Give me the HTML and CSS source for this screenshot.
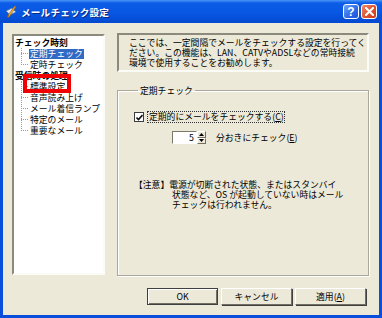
FILE: index.html
```html
<!DOCTYPE html>
<html lang="ja">
<head>
    <meta charset="UTF-8">
    <title>メールチェック設定</title>
    <link rel="stylesheet" href="styles.css">
</head>
<body>
    <div class="window">
        <div class="titlebar">
            <svg class="app-icon" width="13" height="13" viewBox="0 0 13 13">
                <path d="M1 6 L7 3 L11 7 L5 10 Z" fill="#dfe9f7" stroke="#4a6fb0" stroke-width="0.8"/>
                <path d="M2 12 L9 2 L11 1 L10 3 L4 12 Z" fill="#f7c530" stroke="#b3620f" stroke-width="0.8"/>
                <path d="M2 12 L3 10 L4 11 Z" fill="#7a3a05"/>
            </svg>
            <span class="title">メールチェック設定</span>
            <div class="caption-buttons">
                <span class="cap-btn help">?</span>
                <span class="cap-btn close">
                    <svg width="9" height="9" viewBox="0 0 9 9">
                        <path d="M1 1 L8 8 M8 1 L1 8" stroke="#fff" stroke-width="2" stroke-linecap="square"/>
                    </svg>
                </span>
            </div>
        </div>

        <div class="client">
            <div class="main">
                <div class="tree">
                    <ul class="tree-root">
                        <li>
                            <span class="label bold">チェック時刻</span>
                            <ul class="children">
                                <li><span class="label selected">定期チェック</span></li>
                                <li><span class="label">定時チェック</span></li>
                            </ul>
                        </li>
                        <li>
                            <span class="label bold">受信時の処理</span>
                            <ul class="children">
                                <li><span class="label">標準設定</span></li>
                                <li><span class="label">音声読み上げ</span></li>
                                <li><span class="label">メール着信ランプ</span></li>
                                <li><span class="label">特定のメール</span></li>
                                <li><span class="label">重要なメール</span></li>
                            </ul>
                        </li>
                    </ul>
                    <div class="callout"></div>
                </div>

                <div class="pane">
                    <div class="info">
                        ここでは、一定間隔でメールをチェックする設定を行ってく<br>
                        ださい。この機能は、LAN、CATVやADSLなどの常時接続<br>
                        環境で使用することをお勧めします。
                    </div>

                    <fieldset class="group">
                        <legend>定期チェック</legend>
                        <div class="check-row">
                            <span class="checkbox">
                                <svg width="7" height="7" viewBox="0 0 7 7">
                                    <path d="M0.5 3.5 L2.5 5.5 L6.5 1" fill="none" stroke="#111" stroke-width="1.6"/>
                                </svg>
                            </span>
                            <span class="focus">定期的にメールをチェックする(<u>C</u>)</span>
                        </div>
                        <div class="spin-row">
                            <span class="spin-box">5</span>
                            <span class="spin-btns">
                                <span class="spin-btn">
                                    <svg width="5" height="3" viewBox="0 0 5 3"><path d="M0 3 L2.5 0 L5 3 Z" fill="#000"/></svg>
                                </span>
                                <span class="spin-btn">
                                    <svg width="5" height="3" viewBox="0 0 5 3"><path d="M0 0 L2.5 3 L5 0 Z" fill="#000"/></svg>
                                </span>
                            </span>
                            <span class="spin-label">分おきにチェック(<u>E</u>)</span>
                        </div>
                        <p class="note">
                            【注意】電源が切断された状態、またはスタンバイ<br>
                            状態など、OS が起動していない時はメール<br>
                            チェックは行われません。
                        </p>
                    </fieldset>
                </div>
            </div>

            <div class="buttons">
                <button class="default">OK</button>
                <button>キャンセル</button>
                <button>適用(<u>A</u>)</button>
            </div>
        </div>
    </div>
</body>
</html>
```

FILE: styles.css
```css
* {
    box-sizing: border-box;
}

html, body {
    margin: 0;
    padding: 0;
}

body {
    width: 382px;
    height: 318px;
    overflow: hidden;
    font-family: "Noto Sans CJK JP", "Noto Sans", sans-serif;
    font-size: 8.8px;
    color: #000;
}

.window {
    width: 382px;
    height: 318px;
    display: flex;
    flex-direction: column;
    background: #0a4fdc;
}

/* title bar */
.titlebar {
    height: 23px;
    display: flex;
    align-items: center;
    padding: 0 5px;
    background: linear-gradient(#4a96f8 0, #0d5ce8 3px, #0757e3 55%, #0449d0 100%);
}

.app-icon {
    flex: none;
    margin-right: 3px;
}

.title {
    color: #fff;
    font-weight: bold;
    font-size: 9.6px;
    text-shadow: 1px 1px 0 #0a2a86;
    letter-spacing: 0.2px;
}

.caption-buttons {
    margin-left: auto;
    display: flex;
    gap: 2px;
}

.cap-btn {
    width: 16px;
    height: 15px;
    border: 1px solid #fff;
    border-radius: 3px;
    display: flex;
    align-items: center;
    justify-content: center;
    color: #fff;
    font-family: "Liberation Sans", sans-serif;
    font-weight: bold;
    font-size: 12px;
}

.help {
    background: linear-gradient(135deg, #6fa4f8, #2a68e8 60%, #1f55d6);
}

.close {
    background: linear-gradient(135deg, #f08a6a, #e0512d 55%, #c73d1c);
}

/* client area */
.client {
    flex: 1;
    margin: 0 3px 3px;
    background: #ece9d8;
    display: flex;
    flex-direction: column;
}

.main {
    display: flex;
    gap: 12px;
    padding: 11px 10px 0 9px;
}

/* tree view */
.tree {
    position: relative;
    width: 93px;
    height: 241px;
    background: #fff;
    border: 2px solid;
    border-color: #8c8a7c #fbfbf8 #fbfbf8 #8c8a7c;
    padding-top: 1px;
}

.tree ul {
    list-style: none;
    margin: 0;
    padding: 0;
}

.tree li {
    line-height: 11px;
    white-space: nowrap;
}

.label {
    display: inline-block;
    line-height: 10px;
    padding: 0 1px;
}

.bold {
    font-weight: bold;
}

.selected {
    background: #316ac5;
    color: #fff;
}

.children {
    position: relative;
}

.tree .children {
    padding-left: 15px;
}

.children::before {
    content: "";
    position: absolute;
    left: 7px;
    top: 0;
    bottom: 5px;
    border-left: 1px dotted #9a9a9a;
}

.children li {
    position: relative;
}

.children li::before {
    content: "";
    position: absolute;
    left: -8px;
    top: 5px;
    width: 7px;
    border-top: 1px dotted #9a9a9a;
}

.callout {
    position: absolute;
    left: 9px;
    top: 38px;
    width: 48px;
    height: 19px;
    border: 4px solid #f00000;
}

/* right pane */
.pane {
    width: 252px;
    display: flex;
    flex-direction: column;
}

.info {
    height: 39px;
    margin-top: -1px;
    padding: 3px 0 0 10px;
    border: 2px solid;
    border-color: #8c8a7c #fbfbf8 #fbfbf8 #8c8a7c;
    line-height: 10px;
    white-space: nowrap;
    overflow: hidden;
}

.group {
    margin: 13px 0 0;
    height: 191px;
    padding: 15px 0 0 16px;
    border: 1px solid #aca899;
    box-shadow: 1px 1px 0 #fff, inset 1px 1px 0 #fff;
}

.group legend {
    padding: 0 2px;
    margin-left: 4px;
    line-height: 11px;
}

.check-row {
    display: flex;
    align-items: center;
    height: 12px;
}

.checkbox {
    width: 10px;
    height: 10px;
    background: #fff;
    border: 1px solid #3c3c3c;
    display: flex;
    align-items: center;
    justify-content: center;
    margin-right: 3px;
}

.focus {
    border: 1px dotted #333;
    line-height: 10px;
    padding: 0 0 0 1px;
}

.spin-row {
    display: flex;
    align-items: center;
    margin: 8px 0 0 38px;
}

.spin-box {
    width: 25px;
    height: 13px;
    background: #fff;
    border: 1px solid;
    border-color: #7a7869 #fff #fff #7a7869;
    text-align: right;
    padding-right: 2px;
    line-height: 11px;
}

.spin-btns {
    display: flex;
    flex-direction: column;
    width: 9px;
    height: 13px;
}

.spin-btn {
    flex: 1;
    display: flex;
    align-items: center;
    justify-content: center;
    background: #ece9d8;
    border: 1px solid;
    border-color: #fff #716f64 #716f64 #fff;
}

.spin-btn svg {
    display: block;
}

.spin-label {
    margin-left: 10px;
}

.note {
    margin: 36px 0 0 0;
    padding-left: 38px;
    text-indent: -38px;
    line-height: 10px;
    white-space: nowrap;
}

/* dialog buttons */
.buttons {
    display: flex;
    justify-content: flex-end;
    gap: 3px;
    padding: 12px 13px 0 0;
}

button {
    width: 71px;
    height: 17px;
    padding: 0;
    font-family: "Noto Sans CJK JP", "Noto Sans", sans-serif;
    font-size: 8.8px;
    color: #000;
    background: #ece9d8;
    border: 1px solid;
    border-color: #fff #716f64 #716f64 #fff;
    box-shadow: 1px 1px 0 #404040;
}

button.default {
    border-color: #404040;
    box-shadow: inset 1px 1px 0 #fff, inset -1px -1px 0 #716f64;
}
```
